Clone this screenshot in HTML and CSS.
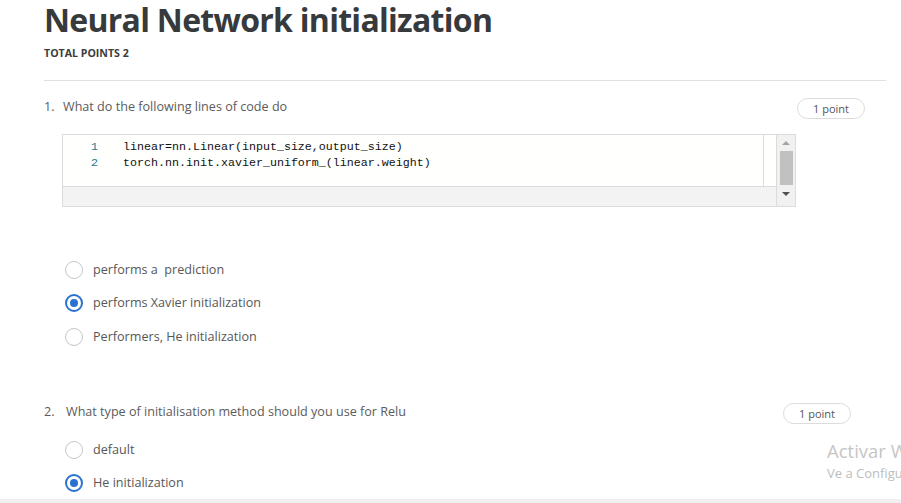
FILE: index.html
```html
<!DOCTYPE html>
<html lang="en">
<head>
<meta charset="utf-8">
<title>Neural Network initialization</title>
<link rel="stylesheet" href="styles.css">
</head>
<body>
<main class="page">
  <h1 class="title">Neural Network initialization</h1>
  <div class="total">TOTAL POINTS 2</div>
  <hr class="divider">

  <section class="question q1">
    <div class="q-head">
      <span class="q-num">1.</span>
      <span class="q-text">What do the following lines of code do</span>
      <span class="pill">1 point</span>
    </div>
    <div class="editor">
      <div class="editor-main">
        <div class="code-area">
          <div class="code-view">
            <div class="gutter"><div>1</div><div>2</div></div>
            <div class="lines"><div>linear=nn.Linear(input_size,output_size)</div><div>torch.nn.init.xavier_uniform_(linear.weight)</div></div>
          </div>
          <div class="code-pad"></div>
        </div>
        <div class="hscroll"></div>
      </div>
      <div class="vscroll">
        <span class="arrow up"></span>
        <span class="thumb"></span>
        <span class="arrow down"></span>
      </div>
    </div>
    <div class="options opts1">
      <label class="option"><span class="radio"></span><span>performs a&nbsp; prediction</span></label>
      <label class="option"><span class="radio checked"></span><span>performs Xavier initialization</span></label>
      <label class="option"><span class="radio"></span><span>Performers, He initialization</span></label>
    </div>
  </section>

  <section class="question q2">
    <div class="q-head">
      <span class="q-num">2.</span>
      <span class="q-text">What type of initialisation method should you use for Relu</span>
      <span class="pill">1 point</span>
    </div>
    <div class="options opts2">
      <label class="option"><span class="radio"></span><span>default</span></label>
      <label class="option"><span class="radio checked"></span><span>He initialization</span></label>
    </div>
  </section>
</main>
<div class="watermark">
  <div class="wm-title">Activar Windows</div>
  <div class="wm-sub">Ve a Configuración para activar Windows.</div>
</div>
<div class="bottom-band"></div>
</body>
</html>
```
FILE: styles.css
```css
html, body {
  margin: 0;
  padding: 0;
  overflow: hidden;
  background: #ffffff;
}
body {
  font-family: "Open Sans", "Liberation Sans", sans-serif;
  color: #555555;
  width: 901px;
  height: 503px;
  position: relative;
}
.page {
  padding-left: 44px;
  width: 842px;
}
.title {
  margin: 0;
  font-size: 32px;
  line-height: 40px;
  font-weight: 700;
  color: #373a3c;
  letter-spacing: -0.72px;
}
.total {
  margin-top: 6px;
  font-size: 10.6px;
  line-height: 14px;
  font-weight: 700;
  color: #3c3c3c;
}
.divider {
  margin: 20px 0 0 0;
  border: 0;
  border-top: 1px solid #e0e0e0;
  height: 0;
}
.question.q1 { margin-top: 17px; }
.question.q2 { margin-top: 49px; }
.q-head {
  display: flex;
  align-items: flex-start;
  font-size: 12.6px;
  line-height: 18px;
  color: #5b5b5b;
}
.q-num { width: 19px; flex: none; }
.q2 .q-num { width: 22px; }
.q-text { flex: 1; }
.pill {
  flex: none;
  width: 68px;
  height: 21px;
  box-sizing: border-box;
  border: 1px solid #dcdcdc;
  border-radius: 11px;
  font-size: 11px;
  line-height: 19px;
  text-align: center;
  color: #555;
}
.q1 .pill { margin-right: 21px; }
.q2 .pill { margin-right: 35px; }

.editor {
  margin-top: 15px;
  margin-left: 18px;
  width: 734px;
  height: 73px;
  box-sizing: border-box;
  border: 1px solid #dcdcdc;
  display: flex;
}
.editor-main {
  flex: 1;
  display: flex;
  flex-direction: column;
}
.code-area {
  height: 51px;
  background: #fffffd;
  border-bottom: 1px solid #dcdcdc;
  border-right: 1px solid #dcdcdc;
  display: flex;
}
.code-view {
  flex: 1;
  display: flex;
  border-right: 1px solid #dcdcdc;
  padding-top: 4px;
  font-family: "Liberation Mono", "DejaVu Sans Mono", monospace;
  font-size: 11.67px;
  line-height: 16.4px;
}
.gutter {
  width: 35px;
  text-align: right;
  color: #237893;
}
.lines {
  margin-left: 25px;
  color: #111;
  white-space: pre;
}
.code-pad { width: 12px; }
.hscroll {
  flex: 1;
  background: #f3f3f3;
  border-right: 1px solid #dcdcdc;
}
.vscroll {
  width: 18px;
  background: #f1f1f1;
  display: flex;
  flex-direction: column;
  align-items: center;
}
.arrow {
  width: 0;
  height: 0;
  border-left: 4px solid transparent;
  border-right: 4px solid transparent;
}
.arrow.up {
  margin-top: 6px;
  border-bottom: 4px solid #a3a3a3;
}
.arrow.down {
  margin-top: 7px;
  border-top: 4px solid #505050;
}
.thumb {
  margin-top: 6px;
  width: 13px;
  height: 34px;
  background: #c1c1c1;
}

.options { display: flex; flex-direction: column; }
.opts1 { margin-top: 46px; }
.opts2 { margin-top: 9.5px; }
.option {
  display: flex;
  align-items: center;
  height: 33.5px;
  padding-left: 21px;
  font-size: 12.6px;
  line-height: 18px;
  color: #575757;
}
.radio {
  width: 18px;
  height: 18px;
  box-sizing: border-box;
  border: 1.5px solid #c6c6c6;
  border-radius: 50%;
  margin-right: 10px;
  flex: none;
  position: relative;
}
.radio.checked {
  border: 2px solid #2a72cf;
}
.radio.checked::after {
  content: "";
  position: absolute;
  left: 3px;
  top: 3px;
  width: 8px;
  height: 8px;
  border-radius: 50%;
  background: #2a72cf;
}

.watermark {
  position: absolute;
  left: 827px;
  top: 438px;
  white-space: nowrap;
  font-family: "Open Sans", "Liberation Sans", sans-serif;
}
.wm-title {
  font-size: 18.5px;
  line-height: 26px;
  color: #c6c6c6;
}
.wm-sub {
  font-size: 13px;
  line-height: 18px;
  color: #bdbdbd;
}
.bottom-band {
  position: absolute;
  left: 0;
  bottom: 0;
  width: 901px;
  height: 4px;
  background: #f0f0f0;
}
```
